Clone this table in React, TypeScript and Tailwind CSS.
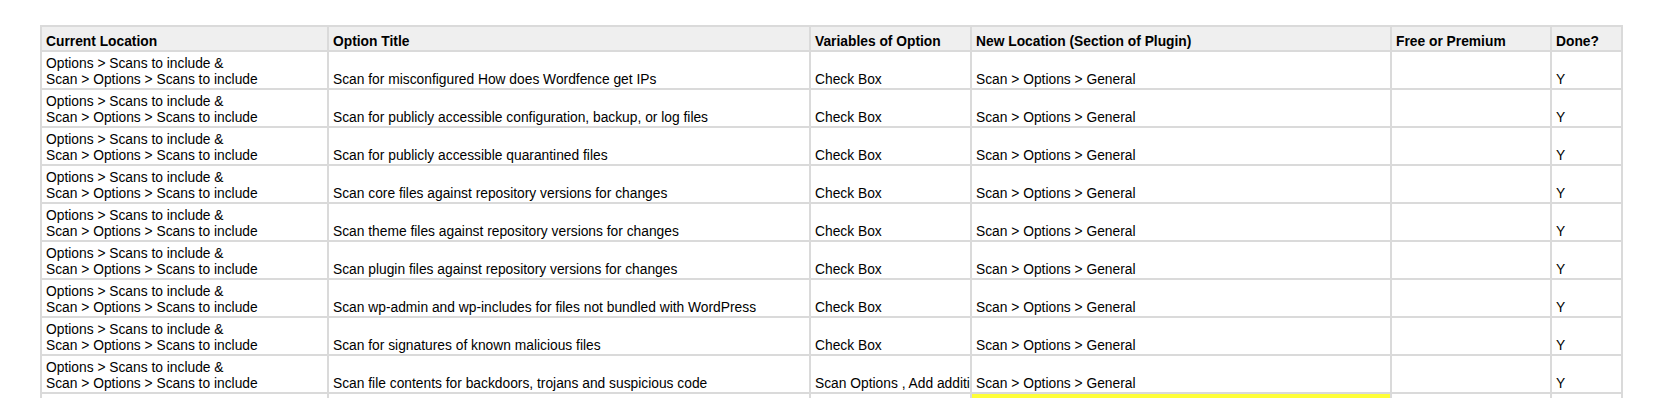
import React from 'react';

const rows = [
  'Scan for misconfigured How does Wordfence get IPs',
  'Scan for publicly accessible configuration, backup, or log files',
  'Scan for publicly accessible quarantined files',
  'Scan core files against repository versions for changes',
  'Scan theme files against repository versions for changes',
  'Scan plugin files against repository versions for changes',
  'Scan wp-admin and wp-includes for files not bundled with WordPress',
  'Scan for signatures of known malicious files',
  'Scan file contents for backdoors, trojans and suspicious code',
];

const headers = [
  'Current Location',
  'Option Title',
  'Variables of Option',
  'New Location (Section of Plugin)',
  'Free or Premium',
  'Done?',
];

const cell = 'border-2 border-[#dadada] px-1 pb-0 align-bottom whitespace-nowrap overflow-hidden';

export default function App() {
  return (
    <div className="h-[398px] overflow-hidden bg-white pl-[40px] pt-[25px] font-['Liberation_Sans',Arial,sans-serif] text-[13.8px] leading-4 text-black">
      <table className="table-fixed border-collapse w-[1583px]">
        <colgroup>
          <col className="w-[287px]" />
          <col className="w-[482px]" />
          <col className="w-[161px]" />
          <col className="w-[420px]" />
          <col className="w-[160px]" />
          <col className="w-[71px]" />
        </colgroup>
        <thead>
          <tr className="h-[25px] bg-[#efefef]">
            {headers.map((h) => (
              <th key={h} className={`${cell} text-left font-bold border-[#d2d2d2]`}>
                {h}
              </th>
            ))}
          </tr>
        </thead>
        <tbody>
          {rows.map((title, i) => (
            <tr key={title} className="h-[38px]">
              <td className={cell}>
                Options &gt; Scans to include &amp;
                <br />
                Scan &gt; Options &gt; Scans to include
              </td>
              <td className={cell}>{title}</td>
              <td className={`${cell} pr-0`}>
                {i === rows.length - 1 ? 'Scan Options , Add additi' : 'Check Box'}
              </td>
              <td className={cell}>Scan &gt; Options &gt; General</td>
              <td className={cell}></td>
              <td className={cell}>Y</td>
            </tr>
          ))}
          <tr className="h-[38px]">
            <td className={cell}></td>
            <td className={cell}></td>
            <td className={cell}></td>
            <td className={`${cell} bg-[#ffff38]`}></td>
            <td className={cell}></td>
            <td className={cell}></td>
          </tr>
        </tbody>
      </table>
    </div>
  );
}
